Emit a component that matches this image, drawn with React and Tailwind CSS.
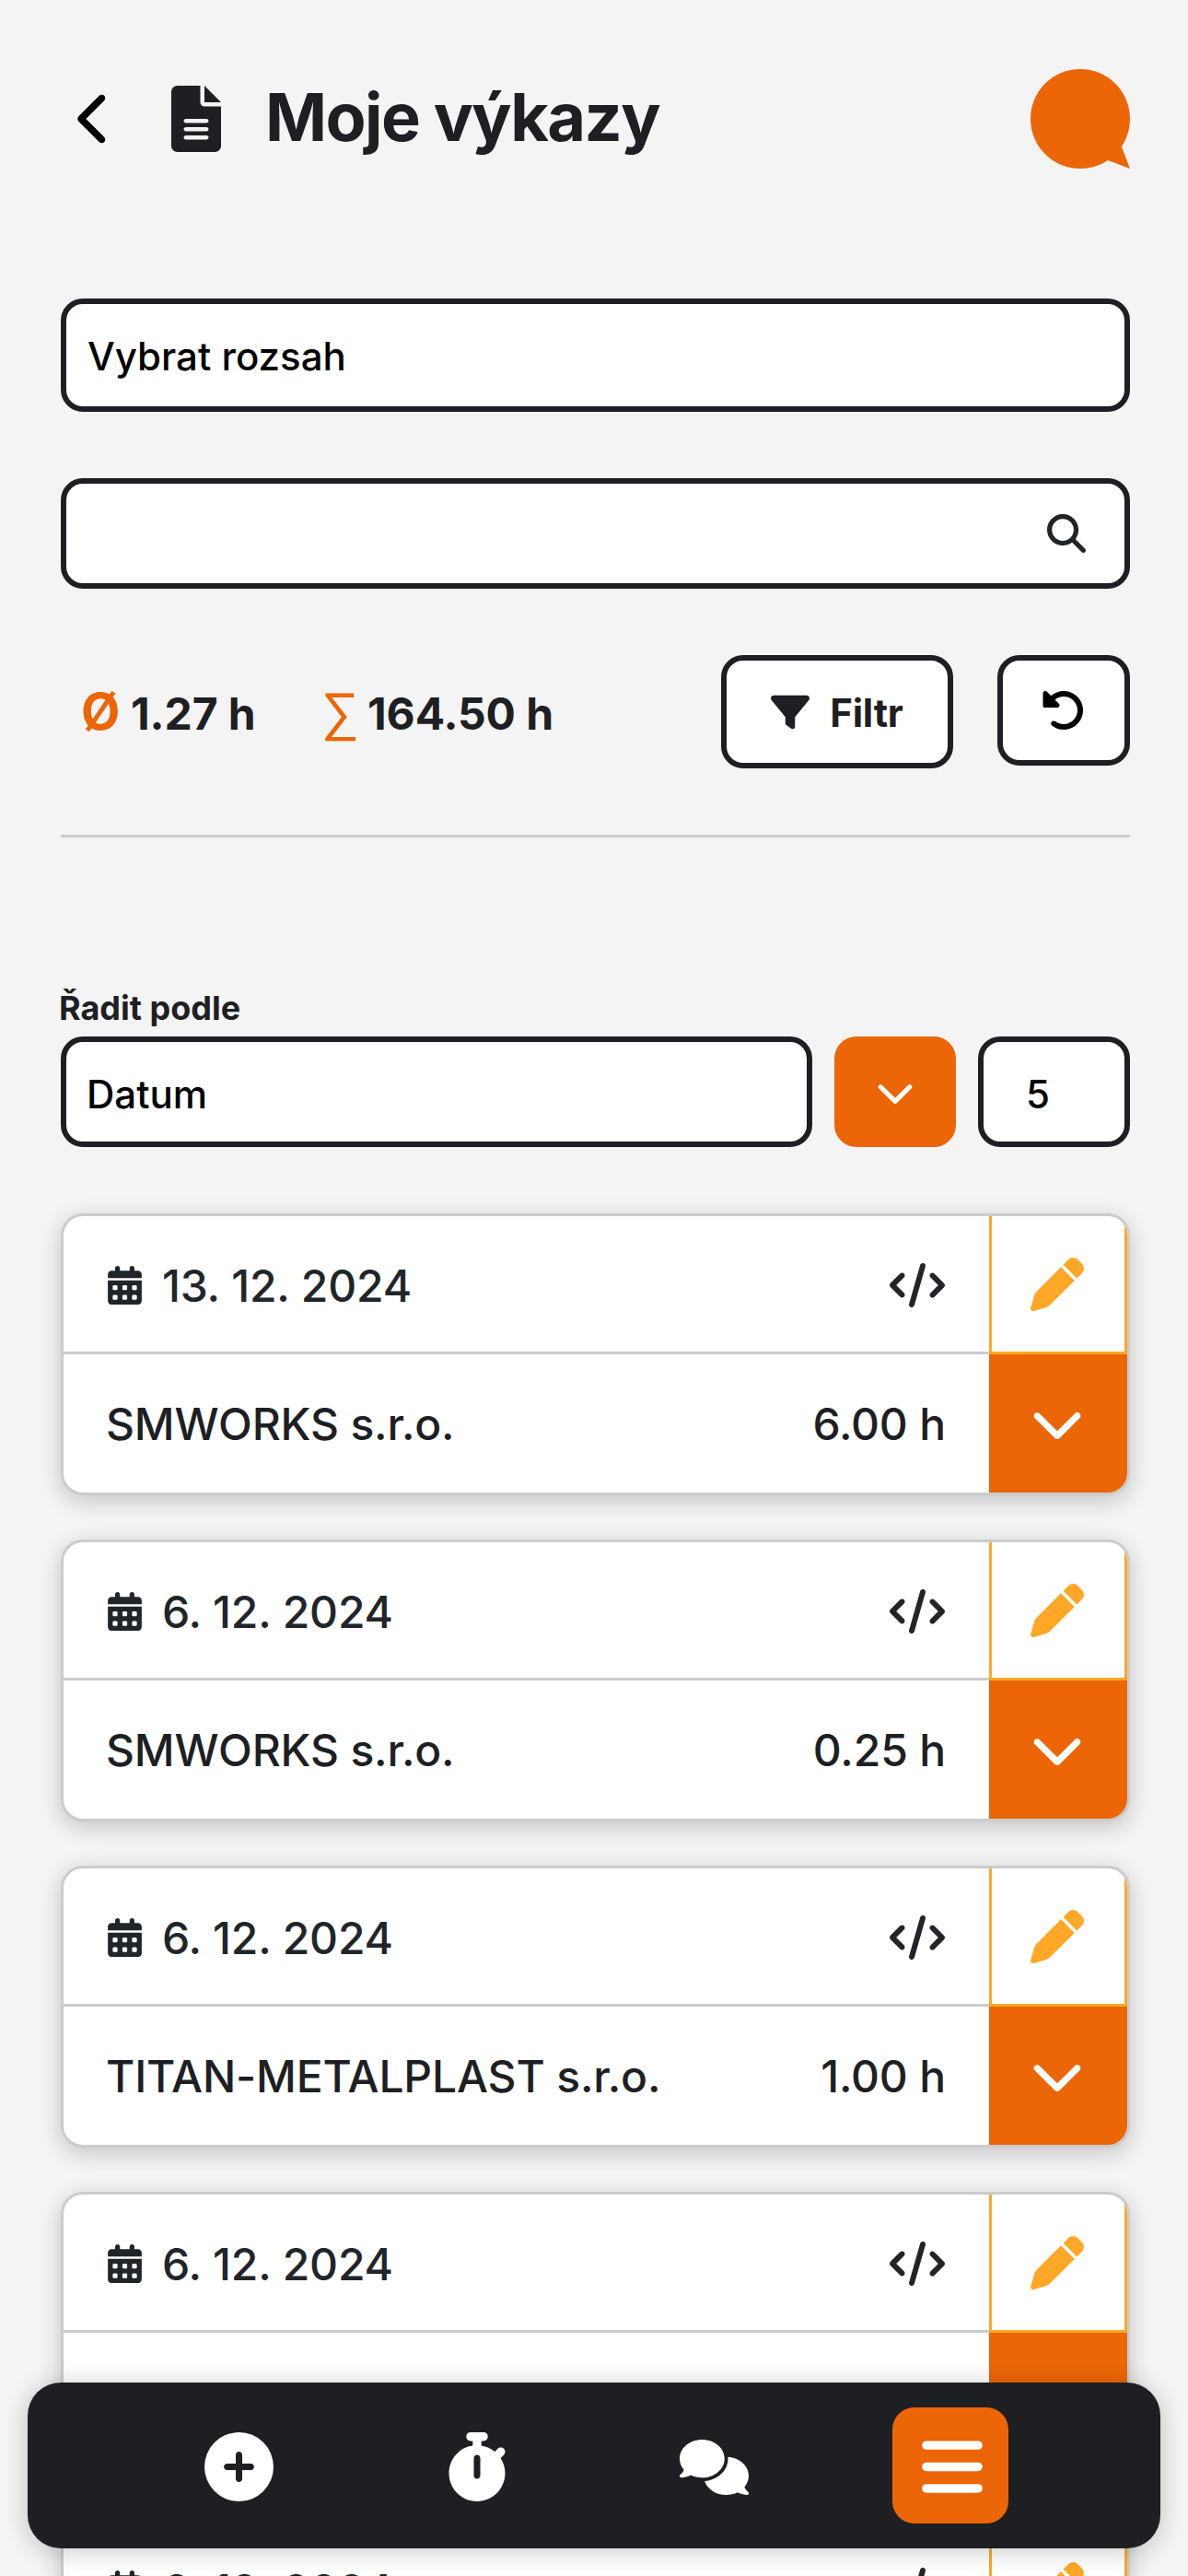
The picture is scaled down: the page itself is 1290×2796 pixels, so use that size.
import React from "react";
import {
  FaFilter,
  FaMagnifyingGlass,
  FaCalendarDays,
  FaCode,
  FaPen,
  FaChevronLeft,
  FaChevronDown,
  FaCirclePlus,
  FaStopwatch,
  FaComments,
} from "react-icons/fa6";

const entries = [
  { date: "13. 12. 2024", client: "SMWORKS s.r.o.", hours: "6.00 h" },
  { date: "6. 12. 2024", client: "SMWORKS s.r.o.", hours: "0.25 h" },
  { date: "6. 12. 2024", client: "TITAN-METALPLAST s.r.o.", hours: "1.00 h" },
  { date: "6. 12. 2024", client: "SMWORKS s.r.o.", hours: "1.00 h" },
  { date: "6. 12. 2024", client: "SMWORKS s.r.o.", hours: "1.00 h" },
];

function FileIcon() {
  return (
    <svg viewBox="0 0 384 512" fill="currentColor" className="h-[72px] w-[54px] shrink-0">
      <path d="M256 0v128h128L256 0zM224 128L224 0H48C21.49 0 0 21.49 0 48v416C0 490.5 21.49 512 48 512h288c26.51 0 48-21.49 48-48V160h-127.1C238.3 160 224 145.7 224 128zM272 416h-160C103.2 416 96 408.8 96 400C96 391.2 103.2 384 112 384h160c8.836 0 16 7.162 16 16C288 408.8 280.8 416 272 416zM272 352h-160C103.2 352 96 344.8 96 336C96 327.2 103.2 320 112 320h160c8.836 0 16 7.162 16 16C288 344.8 280.8 352 272 352zM288 272C288 280.8 280.8 288 272 288h-160C103.2 288 96 280.8 96 272C96 263.2 103.2 256 112 256h160C280.8 256 288 263.2 288 272z" />
    </svg>
  );
}

function UndoIcon() {
  return (
    <svg viewBox="0 0 512 512" fill="currentColor" className="h-12 w-12">
      <path d="M480 256c0 123.4-100.5 223.9-223.9 223.9c-48.84 0-95.17-15.58-134.2-44.86c-14.12-10.59-16.97-30.66-6.375-44.81c10.59-14.12 30.62-16.94 44.81-6.375c27.84 20.91 61 31.94 95.88 31.94C344.3 415.8 416 344.1 416 256s-71.69-159.8-159.8-159.8c-37.46 0-73.09 13.49-101.3 36.64l45.12 45.14c17.01 17.02 4.955 46.1-19.1 46.1H35.17C24.58 224.1 16 215.5 16 204.9V59.04c0-24.04 29.07-36.08 46.07-19.07l47.6 47.63C149.9 52.71 201.5 32.11 256.1 32.11C379.5 32.11 480 132.6 480 256z" />
    </svg>
  );
}

function BarsIcon() {
  return (
    <svg viewBox="0 0 448 512" fill="currentColor" className="h-[75px] w-[66px]">
      <rect x="0" y="64" width="448" height="64" rx="32" />
      <rect x="0" y="224" width="448" height="64" rx="32" />
      <rect x="0" y="384" width="448" height="64" rx="32" />
    </svg>
  );
}

function BubbleLogo() {
  return (
    <svg viewBox="0 0 108 108" className="h-[108px] w-[108px] text-[#ec6608]" fill="currentColor">
      <circle cx="54" cy="54" r="54" />
      <path d="M99 84.5L108 108L84 99L80 84Z" />
    </svg>
  );
}

function Header() {
  return (
    <header className="flex h-[108px] items-center">
      <FaChevronLeft className="ml-[18px] h-[60px] w-[38px] text-black" />
      <div className="ml-[64px] flex items-center">
        <FileIcon />
        <h1 className="ml-[48px] pb-[5px] text-[72px] leading-[108px] font-bold tracking-[-1.6px]">
          Moje výkazy
        </h1>
      </div>
      <div className="ml-auto">
        <BubbleLogo />
      </div>
    </header>
  );
}

function EntryCard({ date, client, hours }) {
  return (
    <article className="flex h-[306px] overflow-hidden rounded-[24px] border-[3px] border-[#cccccc] bg-white text-[48px] leading-[72px] font-medium tracking-[-0.17px] shadow-[0_6px_24px_rgba(0,0,0,0.2)]">
      <div className="flex flex-1 flex-col">
        <div className="flex h-[150px] items-center border-b-[3px] border-[#cccccc] px-12 pt-[3px] text-[#212529]">
          <FaCalendarDays className="h-[42px] w-[37px]" />
          <span className="ml-[22px] pt-[2px]">{date}</span>
          <FaCode className="ml-auto h-12 w-[60px]" />
        </div>
        <div className="flex h-[150px] items-center justify-between pt-[2px] pr-[47px] pl-[46px]">
          <span>{client}</span>
          <span>{hours}</span>
        </div>
      </div>
      <div className="flex w-[150px] flex-col">
        <button className="flex h-[150px] items-center justify-center border-x-[3px] border-b-[3px] border-[#ffa726] pr-[3px] text-[#ffa726]">
          <FaPen className="h-[58px] w-[58px]" />
        </button>
        <button className="flex h-[150px] items-center justify-center bg-[#ec6608] pr-[2px] pb-[2px] text-white">
          <FaChevronDown className="h-[58px] w-[58px]" />
        </button>
      </div>
    </article>
  );
}

function BottomNav() {
  return (
    <nav className="absolute bottom-[30px] left-[30px] flex h-[180px] w-[1230px] items-center justify-center rounded-[36px] bg-[#1e1f23] text-white shadow-[0_3px_27px_rgba(0,0,0,0.22)]">
      <div className="grid w-[1032px] grid-cols-4 place-items-center">
        <div className="flex pt-[3px] pl-[3px]">
          <FaCirclePlus className="h-[75px] w-[75px]" />
        </div>
        <div className="flex pt-[3px] pl-[3px]">
          <FaStopwatch className="h-[75px] w-[66px]" />
        </div>
        <div className="flex pt-[3px] pl-[3px]">
          <FaComments className="h-[60px] w-[75px]" />
        </div>
        <div className="flex h-[126px] w-[126px] items-center justify-center rounded-[24px] bg-[#ec6608] pt-[3px] pl-[3px]">
          <BarsIcon />
        </div>
      </div>
    </nav>
  );
}

export default function App() {
  return (
    <div className="relative h-[2796px] w-[1290px] overflow-hidden bg-[#f4f4f4] pt-[75px] pr-[63px] pl-[66px] font-['Inter',sans-serif] text-[#1e1f23]">
      <Header />

      <div className="mt-[141px] flex h-[123px] items-center rounded-[24px] border-[6px] border-[#1e1f23] bg-white px-[23px] pt-[3px] text-[42px] leading-[60px] font-medium text-black">
        Vybrat rozsah
      </div>

      <div className="mt-[72px] flex h-[120px] items-center justify-end rounded-[24px] border-[6px] border-[#1e1f23] bg-white pr-[42px]">
        <FaMagnifyingGlass className="h-[42px] w-[42px] text-[#212529]" />
      </div>

      <div className="mt-[72px] flex h-[123px] items-start">
        <div className="ml-[22px] flex items-baseline pt-[25px] text-[48px] leading-[72px] font-bold tracking-[-0.1px]">
          <span className="w-[54px] text-[55px] text-[#ec6608]">Ø</span>
          <span className="w-[207px]">1.27 h</span>
          <span className="w-[50px] font-['Liberation_Sans',sans-serif] text-[57.6px] font-normal text-[#ec6608]">
            ∑
          </span>
          <span>164.50 h</span>
        </div>
        <button className="ml-auto flex h-[123px] w-[252px] items-center justify-center rounded-[24px] border-[6px] border-[#1e1f23] bg-white text-[42px] leading-[60px] font-bold">
          <FaFilter className="h-[42px] w-[42px]" />
          <span className="ml-[22px] pt-[3px] tracking-[-0.2px]">Filtr</span>
        </button>
        <button className="ml-12 flex h-[120px] w-[144px] items-center justify-center rounded-[24px] border-[6px] border-[#1e1f23] bg-white text-black">
          <UndoIcon />
        </button>
      </div>

      <hr className="mt-[72px] border-t-[3px] border-[#cccccc]" />

      <div className="-ml-[2px] mt-[158px] h-[58px] text-[36px] leading-[54px] font-bold">Řadit podle</div>
      <div className="flex h-[120px] gap-6 text-[42px] leading-[60px] font-medium text-black">
        <div className="flex w-[816px] items-center rounded-[24px] border-[6px] border-[#1e1f23] bg-white px-[22px] pt-[5px]">
          Datum
        </div>
        <button className="flex w-[132px] items-center justify-center rounded-[24px] bg-[#ec6608] text-white">
          <FaChevronDown className="h-[42px] w-[42px]" />
        </button>
        <div className="flex w-[165px] items-center rounded-[24px] border-[6px] border-[#1e1f23] bg-white pt-[5px] pl-[46px]">
          5
        </div>
      </div>

      <main className="mt-[72px] flex flex-col gap-12">
        {entries.map((entry, i) => (
          <EntryCard key={i} {...entry} />
        ))}
      </main>

      <BottomNav />
    </div>
  );
}
